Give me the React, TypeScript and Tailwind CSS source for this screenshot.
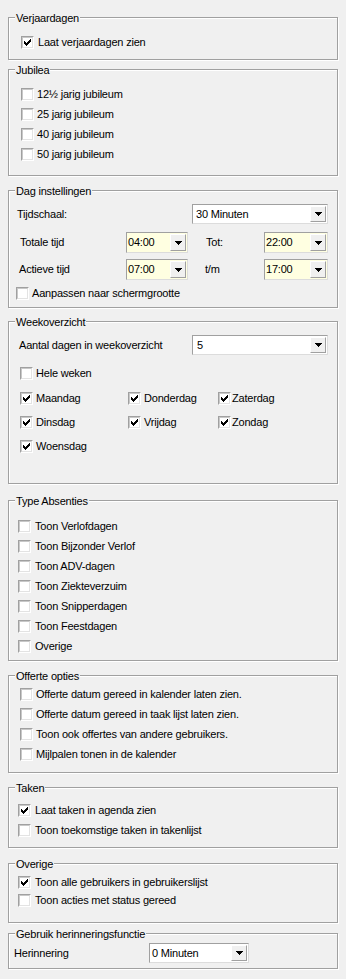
import React from "react";

function Check({ checked, className = "" }: { checked?: boolean; className?: string }) {
  return (
    <div
      className={
        "w-[13px] h-[13px] shrink-0 border border-t-[#a0a0a0] border-l-[#a0a0a0] border-b-[#ffffff] border-r-[#ffffff] " +
        className
      }
    >
      <div className="relative w-full h-full bg-white border border-t-[#c8c8c8] border-l-[#c8c8c8] border-b-[#e3e3e3] border-r-[#e3e3e3]">
        {checked && (
          <svg
            width="7"
            height="7"
            viewBox="0 0 7 7"
            shapeRendering="crispEdges"
            className="absolute left-[1px] top-[1px]"
          >
            <path
              fill="#000"
              d="M6 0h1v1h-1z M5 1h2v1h-2z M0 2h1v1H0z M4 2h3v1H4z M0 3h2v1H0z M3 3h3v1H3z M0 4h5v1H0z M1 5h3v1H1z M2 6h1v1H2z"
            />
          </svg>
        )}
      </div>
    </div>
  );
}

function Combo({ value, className = "", yellow }: { value: string; className?: string; yellow?: boolean }) {
  return (
    <div
      className={
        "shrink-0 flex border border-t-[#a0a0a0] border-l-[#a0a0a0] border-b-[#dcdcdc] border-r-[#dcdcdc] " +
        (yellow ? "bg-[#ffffe1] " : "bg-white ") +
        className
      }
    >
      <div className="flex-1 flex items-center pl-[1px] leading-[13px] overflow-hidden whitespace-nowrap">{value}</div>
      <div className="w-[16px] m-[1px] ml-0 bg-[#f0f0f0] border border-t-[#ffffff] border-l-[#ffffff] border-b-[#a0a0a0] border-r-[#a0a0a0] flex items-center justify-center">
        <svg width="7" height="4" viewBox="0 0 7 4" shapeRendering="crispEdges">
          <path fill="#000" d="M0 0h7v1H0z M1 1h5v1H1z M2 2h3v1H2z M3 3h1v1H3z" />
        </svg>
      </div>
    </div>
  );
}

function CheckRow({
  label,
  checked,
  h = "h-[20px]",
  gap = "gap-[3px]",
}: {
  label: string;
  checked?: boolean;
  h?: string;
  gap?: string;
}) {
  return (
    <div className={"flex items-center whitespace-nowrap " + h + " " + gap}>
      <Check checked={checked} />
      <span className="leading-[13px]">{label}</span>
    </div>
  );
}

function Group({ title, className, children }: { title: string; className: string; children?: React.ReactNode }) {
  return (
    <div
      className={
        "relative ml-[8px] w-[330px] border border-[#a0a0a0] shadow-[inset_1px_1px_0_#ffffff,1px_1px_0_#ffffff] flex flex-col " +
        className
      }
    >
      <div className="absolute left-[6px] top-[-6px] px-[1px] bg-[#f0f0f0] leading-[13px] whitespace-nowrap">{title}</div>
      {children}
    </div>
  );
}

export default function App() {
  return (
    <div className="w-[346px] h-[979px] bg-[#f0f0f0] text-[11px] tracking-[-0.2px] text-black font-['Liberation_Sans',Arial,sans-serif] flex flex-col overflow-hidden">
      <Group title="Verjaardagen" className="mt-[17px] h-[43px] pt-[14px] pl-[12px]">
        <CheckRow label="Laat verjaardagen zien" checked gap="gap-[4px]" />
      </Group>

      <Group title="Jubilea" className="mt-[9px] h-[107px] pt-[14px] pl-[12px]">
        <CheckRow label="12½ jarig jubileum" />
        <CheckRow label="25 jarig jubileum" />
        <CheckRow label="40 jarig jubileum" />
        <CheckRow label="50 jarig jubileum" />
      </Group>

      <Group title="Dag instellingen" className="mt-[14px] h-[118px] pt-[13px] pl-[8px]">
        <div className="flex items-center h-[20px]">
          <span className="w-[175px]">Tijdschaal:</span>
          <Combo value="30 Minuten" className="w-[136px] h-[20px] pl-[2px]" />
        </div>
        <div className="flex items-center h-[21px] mt-[8px]">
          <span className="w-[109px] pl-[3px]">Totale tijd</span>
          <Combo value="04:00" yellow className="w-[62px] h-[21px]" />
          <span className="w-[76px] pl-[18px]">Tot:</span>
          <Combo value="22:00" yellow className="w-[64px] h-[21px]" />
        </div>
        <div className="flex items-center h-[21px] mt-[6px]">
          <span className="w-[109px] pl-[2px]">Actieve tijd</span>
          <Combo value="07:00" yellow className="w-[62px] h-[21px]" />
          <span className="w-[76px] pl-[17px]">t/m</span>
          <Combo value="17:00" yellow className="w-[64px] h-[21px]" />
        </div>
        <div className="mt-[4px] -ml-[1px]">
          <CheckRow label="Aanpassen naar schermgrootte" h="h-[19px]" />
        </div>
      </Group>

      <Group title="Weekoverzicht" className="mt-[13px] h-[163px] pt-[13px] pl-[10px]">
        <div className="flex items-center h-[20px]">
          <span className="w-[173px]">Aantal dagen in weekoverzicht</span>
          <Combo value="5" className="w-[136px] h-[20px] pl-[3px]" />
        </div>
        <div className="mt-[8px] ml-[1px]">
          <CheckRow label="Hele weken" />
        </div>
        <div className="mt-[5px] ml-[1px] grid grid-cols-[108px_90px_1fr] gap-y-[4px]">
          <CheckRow label="Maandag" checked />
          <CheckRow label="Donderdag" checked />
          <CheckRow label="Zaterdag" checked gap="gap-[1px]" />
          <CheckRow label="Dinsdag" checked />
          <CheckRow label="Vrijdag" checked />
          <CheckRow label="Zondag" checked gap="gap-[1px]" />
          <CheckRow label="Woensdag" checked />
        </div>
      </Group>

      <Group title="Type Absenties" className="mt-[16px] h-[161px] pt-[15px] pl-[9px]">
        <CheckRow label="Toon Verlofdagen" gap="gap-[4px]" />
        <CheckRow label="Toon Bijzonder Verlof" gap="gap-[4px]" />
        <CheckRow label="Toon ADV-dagen" gap="gap-[4px]" />
        <CheckRow label="Toon Ziekteverzuim" gap="gap-[4px]" />
        <CheckRow label="Toon Snipperdagen" gap="gap-[4px]" />
        <CheckRow label="Toon Feestdagen" gap="gap-[4px]" />
        <CheckRow label="Overige" gap="gap-[4px]" />
      </Group>

      <Group title="Offerte opties" className="mt-[14px] h-[98px] pt-[8px] pl-[11px]">
        <CheckRow label="Offerte datum gereed in kalender laten zien." />
        <CheckRow label="Offerte datum gereed in taak lijst laten zien." />
        <CheckRow label="Toon ook offertes van andere gebruikers." />
        <CheckRow label="Mijlpalen tonen in de kalender" />
      </Group>

      <Group title="Taken" className="mt-[14px] h-[61px] pt-[12px] pl-[9px]">
        <CheckRow label="Laat taken in agenda zien" checked gap="gap-[4px]" />
        <CheckRow label="Toon toekomstige taken in takenlijst" gap="gap-[4px]" />
      </Group>

      <Group title="Overige" className="mt-[15px] h-[60px] pt-[9px] pl-[9px]">
        <CheckRow label="Toon alle gebruikers in gebruikerslijst" checked h="h-[18px]" gap="gap-[4px]" />
        <CheckRow label="Toon acties met status gereed" h="h-[18px]" gap="gap-[4px]" />
      </Group>

      <Group title="Gebruik herinneringsfunctie" className="mt-[10px] h-[36px] pt-[9px] pl-[5px]">
        <div className="flex items-center h-[20px]">
          <span className="w-[135px]">Herinnering</span>
          <Combo value="0 Minuten" className="w-[100px] h-[20px] pl-[1px]" />
        </div>
      </Group>
    </div>
  );
}
